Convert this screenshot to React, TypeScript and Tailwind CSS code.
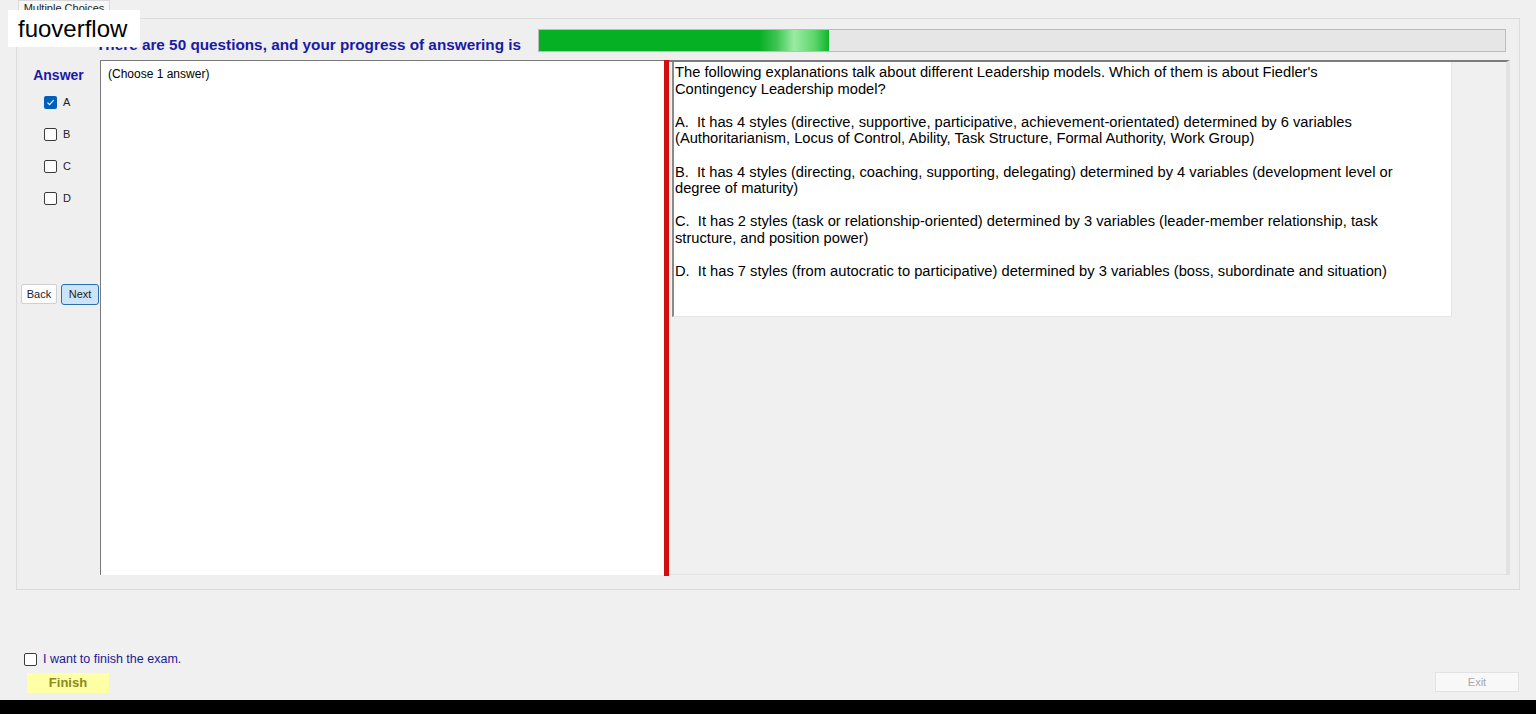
import React from "react";

const font = { fontFamily: '"Liberation Sans", Arial, sans-serif' };

const options = ["A", "B", "C", "D"];

function Box({ checked }: { checked?: boolean }) {
  if (checked) {
    return (
      <span className="flex h-[13px] w-[13px] items-center justify-center rounded-[2px] bg-[#005fb8]">
        <svg width="9" height="9" viewBox="0 0 9 9" fill="none">
          <path d="M1.5 4.6 L3.6 6.6 L7.6 2.2" stroke="#fff" strokeWidth="1.1" />
        </svg>
      </span>
    );
  }
  return <span className="h-[13px] w-[13px] rounded-[2px] border border-[#3c3c3c] bg-white" />;
}

function ProgressBar({ percent }: { percent: number }) {
  return (
    <div className="h-[23px] w-[968px] border border-[#bcbcbc] bg-[#e6e6e6]">
      <div
        className="h-full bg-[linear-gradient(90deg,#06b025_0%,#06b025_76%,#3fc454_82%,#9aeca4_88%,#5cd66a_95%,#0fb52c_100%)]"
        style={{ width: `${percent}%` }}
      />
    </div>
  );
}

const lines: string[][] = [
  [
    "The following explanations talk about different Leadership models. Which of them is about Fiedler's",
    "Contingency Leadership model?",
  ],
  [
    "A.  It has 4 styles (directive, supportive, participative, achievement-orientated) determined by 6 variables",
    "(Authoritarianism, Locus of Control, Ability, Task Structure, Formal Authority, Work Group)",
  ],
  [
    "B.  It has 4 styles (directing, coaching, supporting, delegating) determined by 4 variables (development level or",
    "degree of maturity)",
  ],
  [
    "C.  It has 2 styles (task or relationship-oriented) determined by 3 variables (leader-member relationship, task",
    "structure, and position power)",
  ],
  ["D.  It has 7 styles (from autocratic to participative) determined by 3 variables (boss, subordinate and situation)"],
];

export default function App() {
  return (
    <div className="relative flex h-[714px] w-full flex-col overflow-hidden bg-[#f0f0f0] text-black" style={font}>
      {/* tab strip */}
      <div className="flex h-[18px] pl-[18px]">
        <div className="flex h-[18px] w-[92px] items-start justify-center border-x border-t border-[#d9d9d9] bg-[#f7f7f7] pt-[1px] text-[11px] leading-[12px] text-[#222]">
          Multiple Choices
        </div>
      </div>

      {/* tab page */}
      <div className="mx-[16px] flex h-[572px] flex-col border border-[#dcdcdc] bg-[#efefef]">
        <div className="flex h-[41px] items-start pl-[79px] pt-[10px]">
          <p className="mt-[7px] w-[442px] whitespace-nowrap text-[15.3px] font-bold leading-[17px] text-[#1a1aa6]">
            There are 50 questions, and your progress of answering is
          </p>
          <ProgressBar percent={30} />
        </div>

        <div className="flex h-[515px]">
          {/* answer column */}
          <div className="flex w-[83px] flex-col">
            <p className="mt-[8px] text-center text-[14px] font-bold leading-[15px] text-[#1a1aa6]">Answer</p>
            <div className="mt-[13px] flex flex-col gap-[19px] pl-[27px]">
              {options.map((o, i) => (
                <label key={o} className="flex h-[13px] items-center gap-[6px] text-[11px] text-[#222]">
                  <Box checked={i === 0} />
                  {o}
                </label>
              ))}
            </div>
            <div className="mt-[79px] flex gap-[4px] pl-[4px]">
              <button className="h-[20px] w-[36px] rounded-[2px] border border-[#d0d0d0] bg-[#fdfdfd] text-[11px] text-[#222]">
                Back
              </button>
              <button className="h-[21px] w-[38px] rounded-[3px] border border-[#2a6fb0] bg-[#cce4f7] text-[11px] text-[#222]">
                Next
              </button>
            </div>
          </div>

          {/* answer notes */}
          <div className="h-[515px] w-[564px] border-l border-t border-[#7a7a7a] bg-white px-[7px] pt-[6px] text-[12px] leading-[14px]">
            (Choose 1 answer)
          </div>

          {/* splitter */}
          <div className="h-[516px] w-[5px] bg-[#d20f0f]" />

          {/* question pane */}
          <div className="flex w-[841px] flex-col border-t-2 border-r-4 border-b border-[#7b7b7b] border-r-[#e2e2e2] border-b-[#e2e2e2] bg-[#f0f0f0] pl-[3px]">
            <div className="h-[255px] w-[780px] border-l-2 border-[#8a8a8a] border-b border-r border-b-[#e4e4e4] border-r-[#e4e4e4] bg-white pl-[1px] pt-[2px] text-[14.7px] leading-[16.6px]">
              {lines.map((para, i) => (
                <div key={i} className="mb-[16.6px] whitespace-pre">
                  {para.map((l) => (
                    <div key={l}>{l}</div>
                  ))}
                </div>
              ))}
            </div>
          </div>
        </div>
      </div>

      {/* footer */}
      <div className="flex flex-1 flex-col">
        <label className="ml-[24px] mt-[62px] flex items-center gap-[6px] text-[12.5px] leading-[14px] text-[#1a1a96]">
          <Box />
          I want to finish the exam.
        </label>
        <div className="mt-[7px] flex items-start justify-between pl-[27px] pr-[17px]">
          <button className="h-[20px] w-[82px] bg-[#ffffa6] text-[13px] font-bold text-[#8a8a1e]">Finish</button>
          <button
            disabled
            className="-mt-[1px] h-[20px] w-[84px] border border-[#e2e2e2] bg-[#f8f8f8] text-[11px] text-[#a8a8a8]"
          >
            Exit
          </button>
        </div>
      </div>
      <div className="h-[14px] w-full bg-black" />

      {/* watermark label */}
      <div className="absolute left-[8px] top-[10px] flex h-[37px] w-[132px] items-center bg-white pl-[10px] text-[24px] text-black">
        fuoverflow
      </div>
    </div>
  );
}
